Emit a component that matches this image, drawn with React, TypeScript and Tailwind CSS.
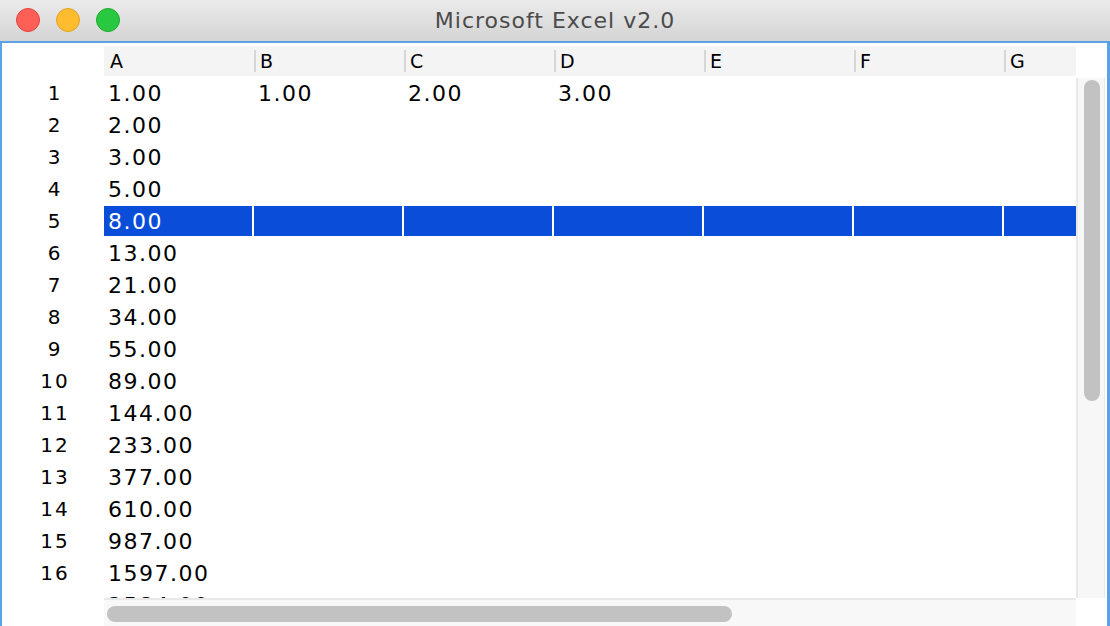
import React from "react";

const COLS = ["A", "B", "C", "D", "E", "F", "G"];

const FIB = [1, 2, 3, 5, 8, 13, 21, 34, 55, 89, 144, 233, 377, 610, 987, 1597, 2584];

// row 1 carries extra values in B..D
const EXTRA: Record<number, string[]> = {
  0: ["1.00", "2.00", "3.00"],
};

const SELECTED_ROW = 4;

export default function App() {
  return (
    <div className="w-[1110px] h-[626px] overflow-hidden flex flex-col bg-white font-['DejaVu_Sans',sans-serif]">
      {/* Title bar */}
      <div className="h-[41px] shrink-0 relative flex items-center justify-center bg-gradient-to-b from-[#ebebeb] to-[#d4d4d4]">
        <div className="absolute left-[16px] top-[8px] flex gap-[16px]">
          <span className="w-[24px] h-[24px] rounded-full bg-[#fe5f57] border border-[#e2463f]" />
          <span className="w-[24px] h-[24px] rounded-full bg-[#febc2e] border border-[#e0a328]" />
          <span className="w-[24px] h-[24px] rounded-full bg-[#28c840] border border-[#1eaa31]" />
        </div>
        <span className="text-[22px] text-[#4b4b4b] tracking-[1px] leading-none">Microsoft Excel v2.0</span>
      </div>
      <div className="h-[2px] shrink-0 bg-[#5ba3e9]" />

      {/* Window body */}
      <div className="flex-1 flex border-l-2 border-r-[3px] border-[#5ba3e9] min-h-0">
        <div className="w-[1074px] flex flex-col">
          {/* Table viewport */}
          <div className="h-[555px] overflow-hidden flex flex-col">
            {/* Column headers */}
            <div className="flex pt-[3px] pb-[2px] shrink-0">
              <div className="w-[102px] shrink-0" />
              {COLS.map((c, i) => (
                <div
                  key={c}
                  className={`h-[30px] bg-[#f4f4f4] flex items-center ${
                    i === COLS.length - 1 ? "w-[72px]" : "w-[150px]"
                  }`}
                >
                  <span className={`w-[2px] h-[22px] ${i === 0 ? "bg-[#f4f4f4]" : "bg-[#d6d6d6]"}`} />
                  <span className="pl-[4px] text-[19px] text-black leading-none">{c}</span>
                </div>
              ))}
            </div>

            {/* Rows */}
            {FIB.map((v, r) => {
              const selected = r === SELECTED_ROW;
              const values = [v.toFixed(2), ...(EXTRA[r] || [])];
              return (
                <div key={r} className="flex h-[32px] shrink-0">
                  <div className="w-[102px] h-[30px] shrink-0 flex items-center justify-center pl-[4px] text-[20px] tracking-[2px] text-black">
                    {r + 1}
                  </div>
                  {COLS.map((c, i) => (
                    <div
                      key={c}
                      className={`h-[30px] shrink-0 flex items-center pl-[4px] text-[22px] tracking-[1.5px] whitespace-nowrap ${
                        i === COLS.length - 1 ? "w-[72px]" : "w-[148px] mr-[2px]"
                      } ${selected ? "bg-[#0a4dd8] text-white" : "text-black"}`}
                    >
                      {values[i] || ""}
                    </div>
                  ))}
                </div>
              );
            })}
          </div>

          {/* Horizontal scrollbar */}
          <div className="flex-1 flex">
            <div className="w-[102px] shrink-0" />
            <div className="w-[972px] bg-[#f8f8f8] border-t-2 border-[#e8e8e8] pt-[6px] pl-[3px]">
              <div className="w-[625px] h-[16px] rounded-full bg-[#c2c2c2]" />
            </div>
          </div>
        </div>

        {/* Vertical scrollbar */}
        <div className="w-[29px] flex flex-col">
          <div className="h-[35px] shrink-0" />
          <div className="h-[520px] shrink-0 bg-[#f7f7f7] border-l-2 border-r border-[#e8e8e8] pt-[2px] pl-[6px]">
            <div className="w-[16px] h-[321px] rounded-full bg-[#c2c2c2]" />
          </div>
        </div>
      </div>
    </div>
  );
}
